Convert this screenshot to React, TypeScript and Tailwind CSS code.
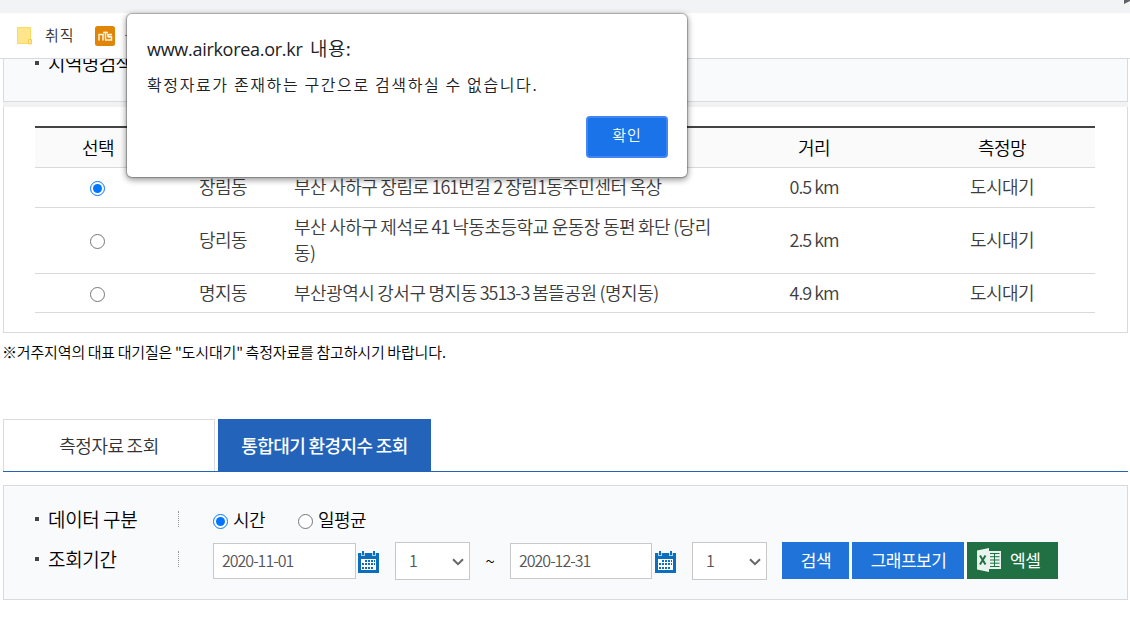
import type { ReactNode } from "react";

const kr = "font-['Noto_Sans_CJK_KR',sans-serif]";

/** Korean text whose Latin and digit runs are set a little tighter than the Hangul. */
function T({ children, className = "" }: { children: string; className?: string }) {
  const parts = children.split(/([0-9A-Za-z.\-]+)/);
  return (
    <span className={"whitespace-nowrap " + className}>
      {parts.map((p, i) => (i % 2 ? <span key={i} className="tracking-[-1px]">{p}</span> : p))}
    </span>
  );
}

const rows = [
  { name: "장림동", addr: ["부산 사하구 장림로 161번길 2 장림1동주민센터 옥상"], dist: "0.5 km", h: "h-10 pb-[3px]" },
  { name: "당리동", addr: ["부산 사하구 제석로 41 낙동초등학교 운동장 동편 화단 (당리", "동)"], dist: "2.5 km", h: "h-[66px] pb-[3px]" },
  { name: "명지동", addr: ["부산광역시 강서구 명지동 3513-3 봄뜰공원 (명지동)"], dist: "4.9 km", h: "h-[39px] pb-[2px]" },
];

const cols = "grid grid-cols-[126px_124px_434px_190px_186px] items-center border-b border-[#d9d9d9]";

function Calendar() {
  return (
    <svg width="21" height="22" viewBox="0 0 21 22" className="mt-[2px] shrink-0" shapeRendering="crispEdges">
      <path d="M0 2h21v20H0z" fill="#0b6fbd" />
      <path d="M3 8h15v11H3z" fill="#fff" />
      <path d="M3 2h4v3H3zM14 2h4v3h-4z" fill="#a9d0ea" />
      <path d="M4 0h2v4H4zM15 0h2v4h-2z" fill="#0b6fbd" />
      <g fill="#0b6fbd">
        {[9, 12, 15].flatMap((y, r) =>
          [4, 7, 10, 13, 16].map((x, c) =>
            (r === 0 && c === 0) || (r === 2 && c > 3) ? null : (
              <rect key={x + "-" + y} x={x} y={y + (r === 2 ? 1 : 0)} width={c === 4 ? 1 : 2} height="2" />
            )
          )
        )}
      </g>
    </svg>
  );
}

function Select() {
  return (
    <div className="flex h-[38px] w-[75px] items-center justify-between border border-[#c8c8c8] bg-white pr-[5px] pb-px pl-[13px] text-[16px] font-[350] text-[#555]">
      <span>1</span>
      <svg width="12" height="8" viewBox="0 0 12 8" className="mt-[3px]">
        <path d="M1 1.2 6 6.2 11 1.2" fill="none" stroke="#666" strokeWidth="2" />
      </svg>
    </div>
  );
}

function DateBox({ children, className }: { children: string; className: string }) {
  return (
    <div className={"flex h-9 items-center border border-[#c8c8c8] bg-white pb-[2px] pl-2 text-[16px] font-[350] text-[#555] " + className}>
      <T>{children}</T>
    </div>
  );
}

function Label({ children }: { children: string }) {
  return (
    <div className="flex h-10 w-[175px] items-center">
      <i className="mr-[9px] h-1 w-1 bg-[#444]" />
      <T className="w-[130px] text-[19px] tracking-[-0.3px] text-black">{children}</T>
      <i className="h-4 border-l border-dotted border-[#999]" />
    </div>
  );
}

function Button({ children, className }: { children: ReactNode; className: string }) {
  return <div className={"flex h-[37px] items-center pb-px text-[17px] font-normal text-white " + className}>{children}</div>;
}

export default function App() {
  return (
    <div className={"relative h-[627px] w-[1130px] overflow-hidden bg-white font-[350] tracking-[-0.5px] [word-spacing:-0.5px] " + kr}>
      <div className="flex h-[13px] justify-end bg-[#f1f3f4]">
        <svg width="6" height="4" viewBox="0 0 6 4"><path d="M0 0h6v1L0 4z" fill="#5f6368" /></svg>
      </div>
      <div className="flex h-[46px] items-center border-b border-[#d9dadb] pl-4">
        <svg width="18" height="20" viewBox="0 0 18 20">
          <path d="M1.500 1.500h13v16h-13z" fill="#ffe58c" stroke="#fbd95c" />
          <path d="M12.500 13.500h3v4.500h-3z" fill="#ffe58c" stroke="#f6ce50" />
        </svg>
        <span className="ml-[11px] pb-px text-[15px] tracking-[1px] text-[#333]">취직</span>
        <svg width="20" height="20" viewBox="0 0 20 20" className="ml-[20px]">
          <rect width="20" height="20" rx="2.500" fill="#e08508" />
          <path d="M4 14.500V8.500H8V14.500M10.500 5.500V13.500M8 6.500H13M12 8.500H17M16.500 10.500H13V8.500M13 11H16.500V14H10" fill="none" stroke="#fff3df" strokeWidth="1.500" />
        </svg>
        <i className="ml-[10px] h-px w-3 bg-[#a67a55]" />
      </div>

      <div className="ml-[3px] w-[1125px]">
        <div className="h-[43px] overflow-hidden border-x border-b border-[#d9dadd] bg-[#f9fafc] pl-[31px]">
          <div className="-mt-[16px] flex h-10 items-center">
            <i className="mr-[9px] h-1 w-1 bg-[#444]" />
            <T className="text-[19px] tracking-[-0.6px] text-black">지역명검색</T>
          </div>
        </div>
        <div className="h-[5px] bg-[#f2f2f2]" />
        <div className="h-[226px] border-x border-b border-[#d9d9d9] pt-[19px] pl-[31px] text-[18px]">
          <div className="w-[1060px] border-t-2 border-[#444]">
            <div className={cols + " h-10 bg-[#fafafa] pb-px text-center text-black"}>
              <T>선택</T><T>측정소명</T><T>주소</T><T>거리</T><T>측정망</T>
            </div>
            {rows.map((r, i) => (
              <div key={r.name} className={cols + " text-center leading-[26px] text-[#3c3c3c] " + r.h}>
                <input type="radio" name="station" defaultChecked={i === 0} className="mt-[5px] mr-px h-[15px] w-[15px] justify-self-center" />
                <T>{r.name}</T>
                <div className="flex flex-col pl-[9px] text-left">
                  {r.addr.map((a) => <T key={a}>{a}</T>)}
                </div>
                <T>{r.dist}</T>
                <T>도시대기</T>
              </div>
            ))}
          </div>
        </div>

        <div className="flex h-[38px] items-center text-[15px] tracking-[-0.16px] text-black">
          <T className="-ml-px">※거주지역의 대표 대기질은 "도시대기" 측정자료를 참고하시기 바랍니다.</T>
        </div>

        <div className="mt-[48px] flex h-[53px] gap-[3px] border-b border-[#2364ba] text-[18px]">
          <div className="flex w-[212px] items-center justify-center border-x border-t border-[#d9dcdc] text-[#333]">
            <T>측정자료 조회</T>
          </div>
          <div className="flex w-[213px] items-center justify-center bg-[#2364ba] font-medium text-white">
            <T>통합대기 환경지수 조회</T>
          </div>
        </div>

        <div className="mt-[13px] h-[115px] border border-[#d9dadd] bg-[#f9fafc] pt-[13px] pl-[31px]">
          <div className="flex h-10 items-center text-[18px] text-black">
            <Label>데이터 구분</Label>
            <input type="radio" name="kind" defaultChecked className="mt-[4px] ml-[3px] h-[15px] w-[15px]" />
            <T className="ml-[5px] w-[65px]">시간</T>
            <input type="radio" name="kind" className="mt-[4px] h-[15px] w-[15px]" />
            <T className="ml-[5px]">일평균</T>
          </div>
          <div className="flex h-10 items-center">
            <Label>조회기간</Label>
            <div className="mt-[3px] ml-[3px] flex items-center">
              <DateBox className="mr-[2px] w-[143px]">2020-11-01</DateBox>
              <Calendar />
              <i className="w-4" />
              <Select />
              <span className="w-10 text-center text-[17px] text-black">~</span>
              <DateBox className="mr-[3px] w-[142px]">2020-12-31</DateBox>
              <Calendar />
              <i className="w-4" />
              <Select />
              <Button className="ml-[15px] w-[67px] justify-center bg-[#2074d9] pl-px"><T>검색</T></Button>
              <Button className="ml-[3px] w-[112px] justify-center bg-[#2074d9] pl-px"><T>그래프보기</T></Button>
              <Button className="ml-[3px] w-[91px] bg-[#217044] pl-[10px]">
                <svg width="24" height="24" viewBox="0 0 24 24" className="mr-[9px]">
                  <path d="M0 2.500 12 0V24L0 21.500Z" fill="#e9f3ed" />
                  <path d="M12 3H24V21H12Z" fill="#e9f3ed" />
                  <path d="M3 7.500 8.500 16.500M8.500 7.500 3 16.500" stroke="#217044" strokeWidth="2" />
                  <path d="M13 5.500H22.500M13 8.700H22.500M13 12H22.500M13 15.200H22.500M13 18.500H22.500M17.500 5V19" stroke="#217044" strokeWidth="1" />
                </svg>
                <T>엑셀</T>
              </Button>
            </div>
          </div>
        </div>
      </div>

      <div className="absolute top-[14px] left-[127px] h-[163px] w-[560px] rounded-[5px] bg-white text-[#202124] shadow-[0_0_1px_1px_rgba(0,0,0,0.25),0_2px_6px_1px_rgba(0,0,0,0.4)] [word-spacing:0px]">
        <div className="mt-[20px] ml-5 flex h-7 text-[19px] leading-7 whitespace-nowrap">
          <span className="mt-px w-[163px] font-['Open_Sans'] text-[18px] font-normal tracking-[-0.29px]">www.airkorea.or.kr</span>
          <span className="tracking-[0.4px]">내용:</span>
        </div>
        <div className="mt-[10px] ml-5 h-6 text-[16px] leading-6 tracking-[1.620px] whitespace-nowrap">
          확정자료가 존재하는 구간으로 검색하실 수 없습니다.
        </div>
        <div className="mt-5 ml-[459px] flex h-[42px] w-[82px] items-center justify-center rounded-[4px] border-[2.500px] border-[#4285f4] bg-[#1a73e8] pb-[3px] text-[15px] tracking-[1px] text-white">
          확인
        </div>
      </div>
    </div>
  );
}
